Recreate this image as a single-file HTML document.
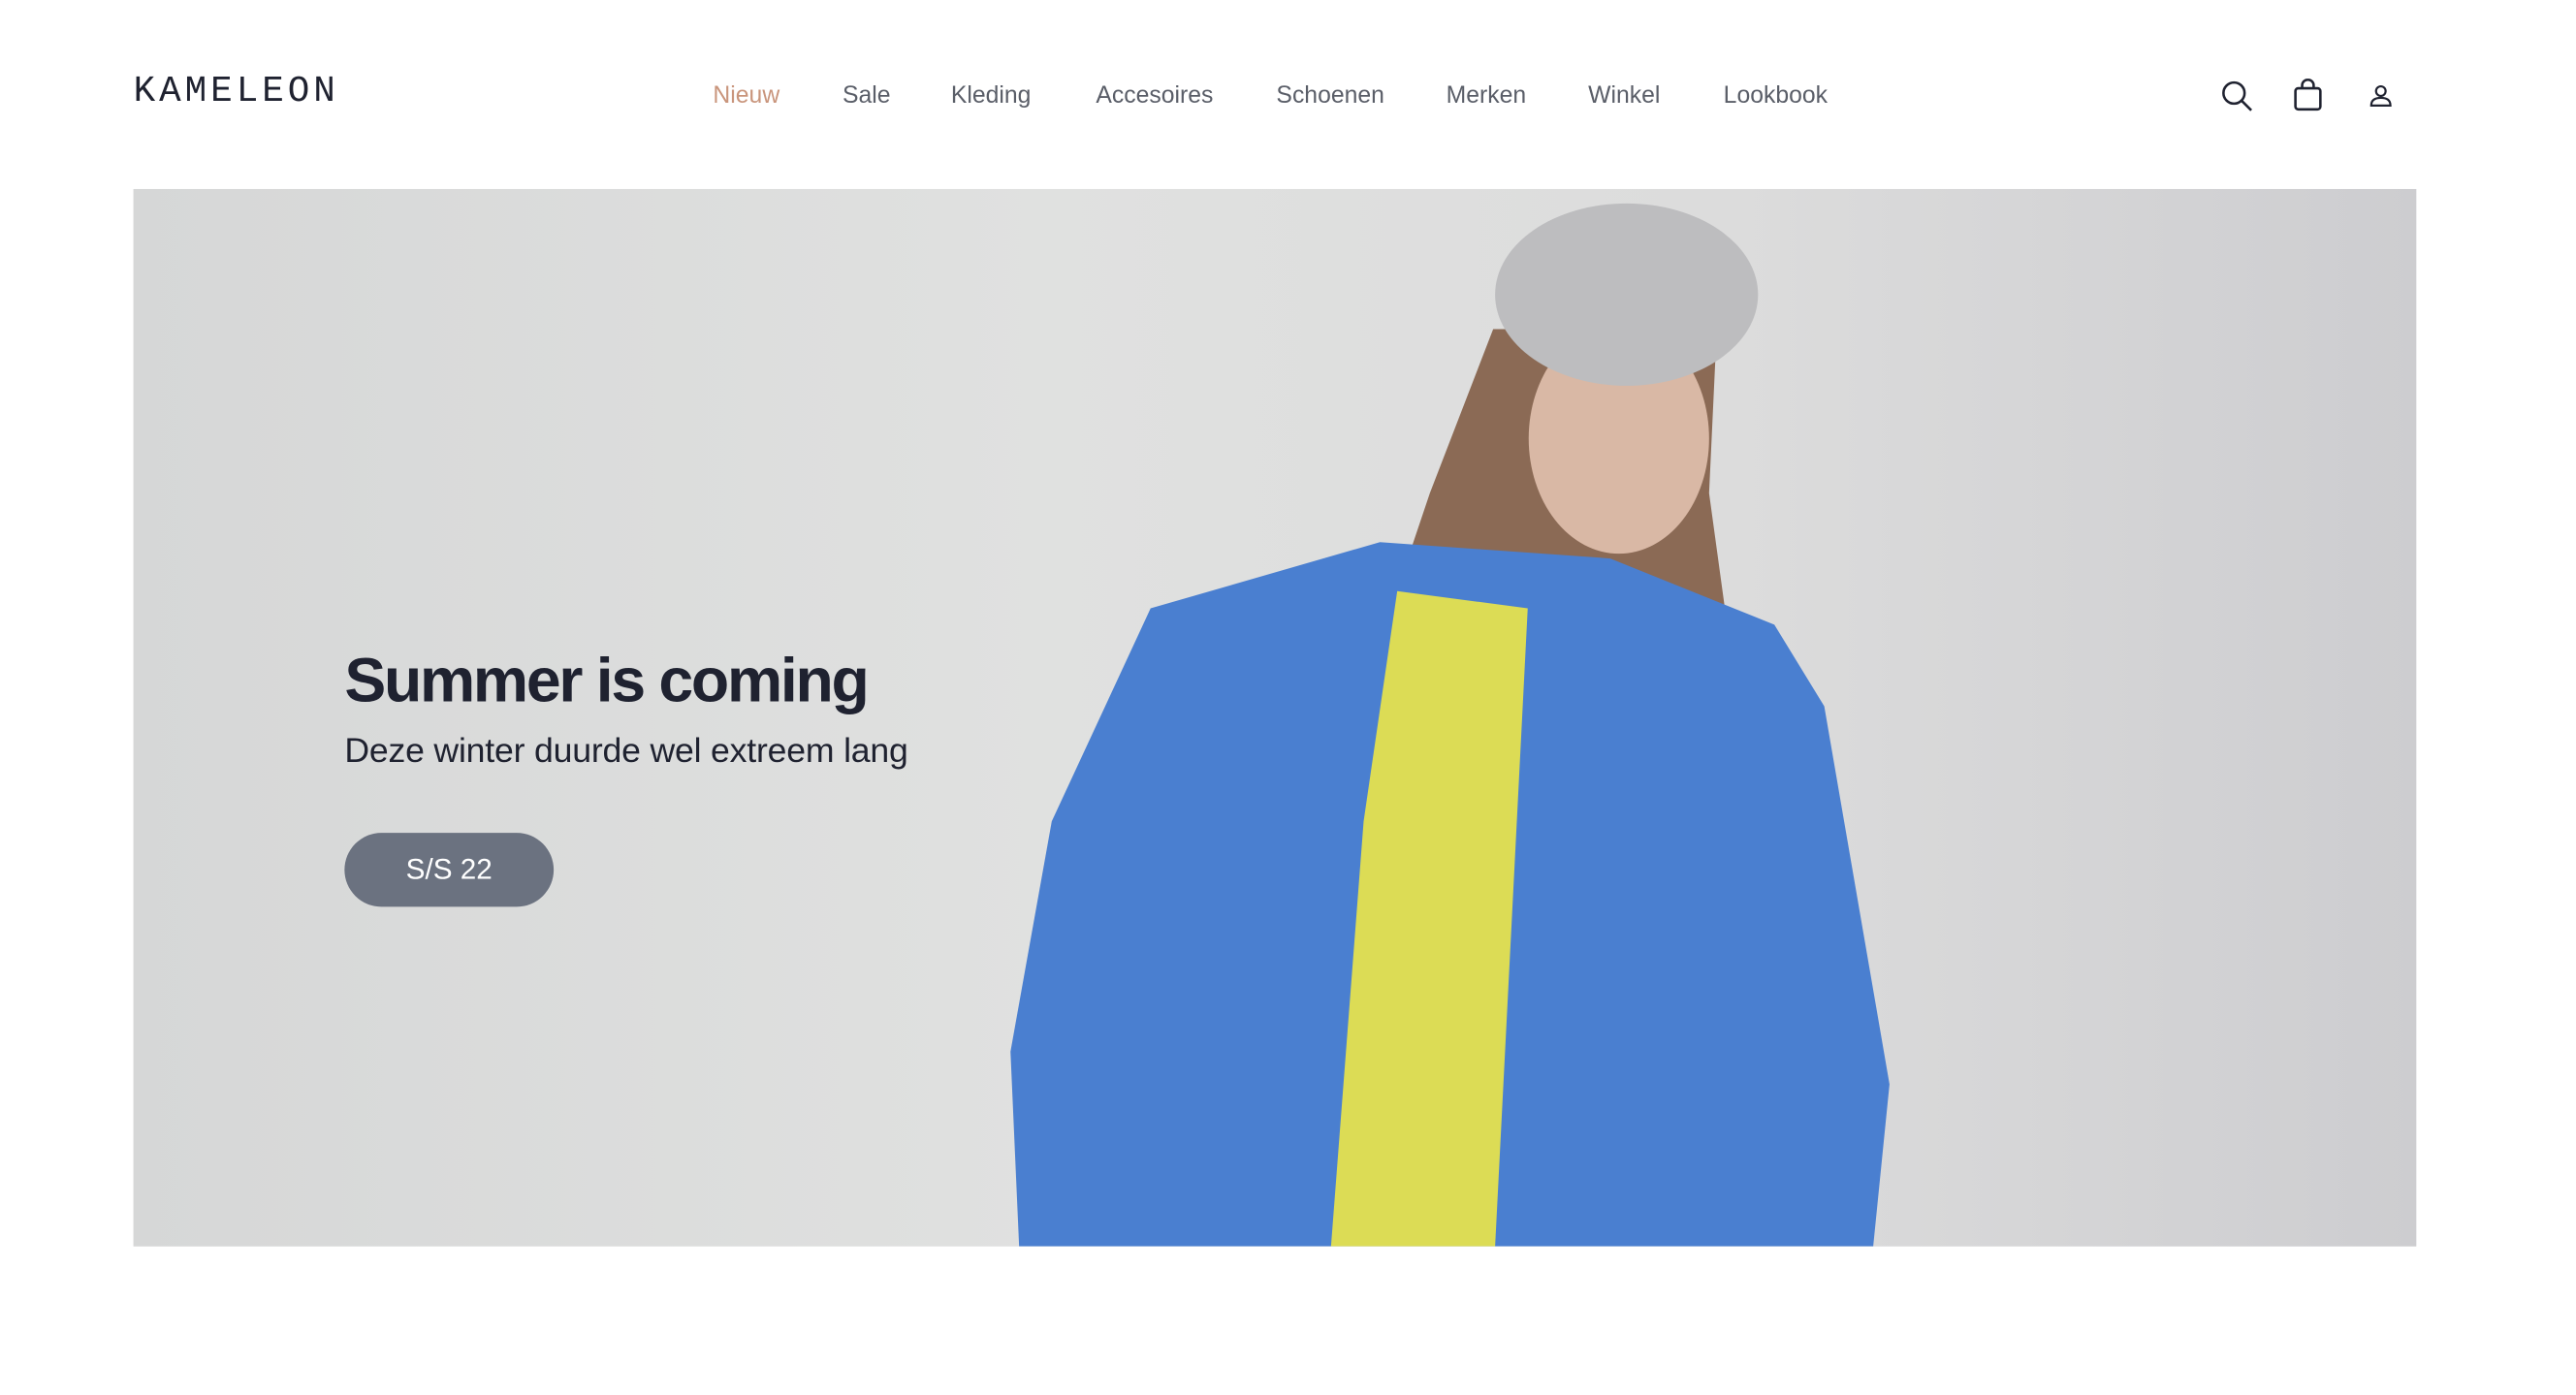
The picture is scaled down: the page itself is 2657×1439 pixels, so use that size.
<!DOCTYPE html>
<html><head><meta charset="utf-8"><style>
html,body{margin:0;padding:0;background:#fff;width:2657px;height:1439px;overflow:hidden;font-family:"Liberation Sans",sans-serif;}
#w{position:absolute;left:0;top:0;width:2684px;height:1454px;transform:scale(0.9898);transform-origin:0 0;}
.logo{position:absolute;left:139px;top:74px;font-family:"Liberation Mono",monospace;font-size:38px;letter-spacing:4px;color:#1f2230;}
.nav{position:absolute;top:85px;font-size:25px;color:#5a5e68;}
.hero{position:absolute;left:139px;top:197px;width:2379px;height:1102px;overflow:hidden;background:linear-gradient(90deg,#d6d7d7 0%,#e0e1e0 40%,#dcdcdc 70%,#cdcdd0 100%);}
h1{position:absolute;left:359px;top:671px;margin:0;font-size:65px;font-weight:bold;letter-spacing:-2.3px;color:#1f2230;}
.sub{position:absolute;left:359px;top:761px;font-size:36px;color:#1f2230;letter-spacing:-0.2px;}
.btn{position:absolute;left:359px;top:868px;width:218px;height:77px;border-radius:39px;background:#6b7280;color:#fff;font-size:30px;text-align:center;line-height:77px;}
</style></head><body><div id="w">
<div class="logo">KAMELEON</div>
<div class="nav" style="left:743px;color:#c9957c">Nieuw</div>
<div class="nav" style="left:878px">Sale</div>
<div class="nav" style="left:991px">Kleding</div>
<div class="nav" style="left:1142px">Accesoires</div>
<div class="nav" style="left:1330px">Schoenen</div>
<div class="nav" style="left:1507px">Merken</div>
<div class="nav" style="left:1655px">Winkel</div>
<div class="nav" style="left:1796px">Lookbook</div>
<svg style="position:absolute;left:2314px;top:83px" width="34" height="34" viewBox="0 0 34 34" fill="none" stroke="#1f2230" stroke-width="2.6"><circle cx="14" cy="14" r="11"/><path d="M22 22l10 10"/></svg>
<svg style="position:absolute;left:2390px;top:82px" width="30" height="34" viewBox="0 0 30 34" fill="none" stroke="#1f2230" stroke-width="2.6"><rect x="2" y="10" width="26" height="22" rx="3"/><path d="M9 10V7a6 6 0 0 1 12 0v3"/></svg>
<svg style="position:absolute;left:2469px;top:88px" width="24" height="24" viewBox="0 0 24 24" fill="none" stroke="#1f2230" stroke-width="2.2"><circle cx="12" cy="7" r="5"/><path d="M2 22c0-6 4-8 10-8s10 2 10 8z"/></svg>
<div class="hero">
<svg width="2379" height="1102" viewBox="0 0 2379 1102" style="position:absolute;left:0;top:0">
<polygon points="1417,146 1351,317 1282,522 1368,539 1676,565 1642,317 1650,146" fill="#8b6a55"/>
<ellipse cx="1548" cy="260" rx="94" ry="120" fill="#d9b8a5"/>
<ellipse cx="1556" cy="110" rx="137" ry="95" fill="#bdbdbf"/>
<polygon points="1060,437 1299,368 1539,385 1710,454 1762,539 1830,933 1813,1102 923,1102 914,899 957,659" fill="#4a7fd0"/>
<polygon points="1317,419 1453,437 1419,1102 1248,1102 1282,659" fill="#dcdc55"/>
</svg>
</div>
<h1>Summer is coming</h1>
<div class="sub">Deze winter duurde wel extreem lang</div>
<div class="btn">S/S 22</div>
</div></body></html>
